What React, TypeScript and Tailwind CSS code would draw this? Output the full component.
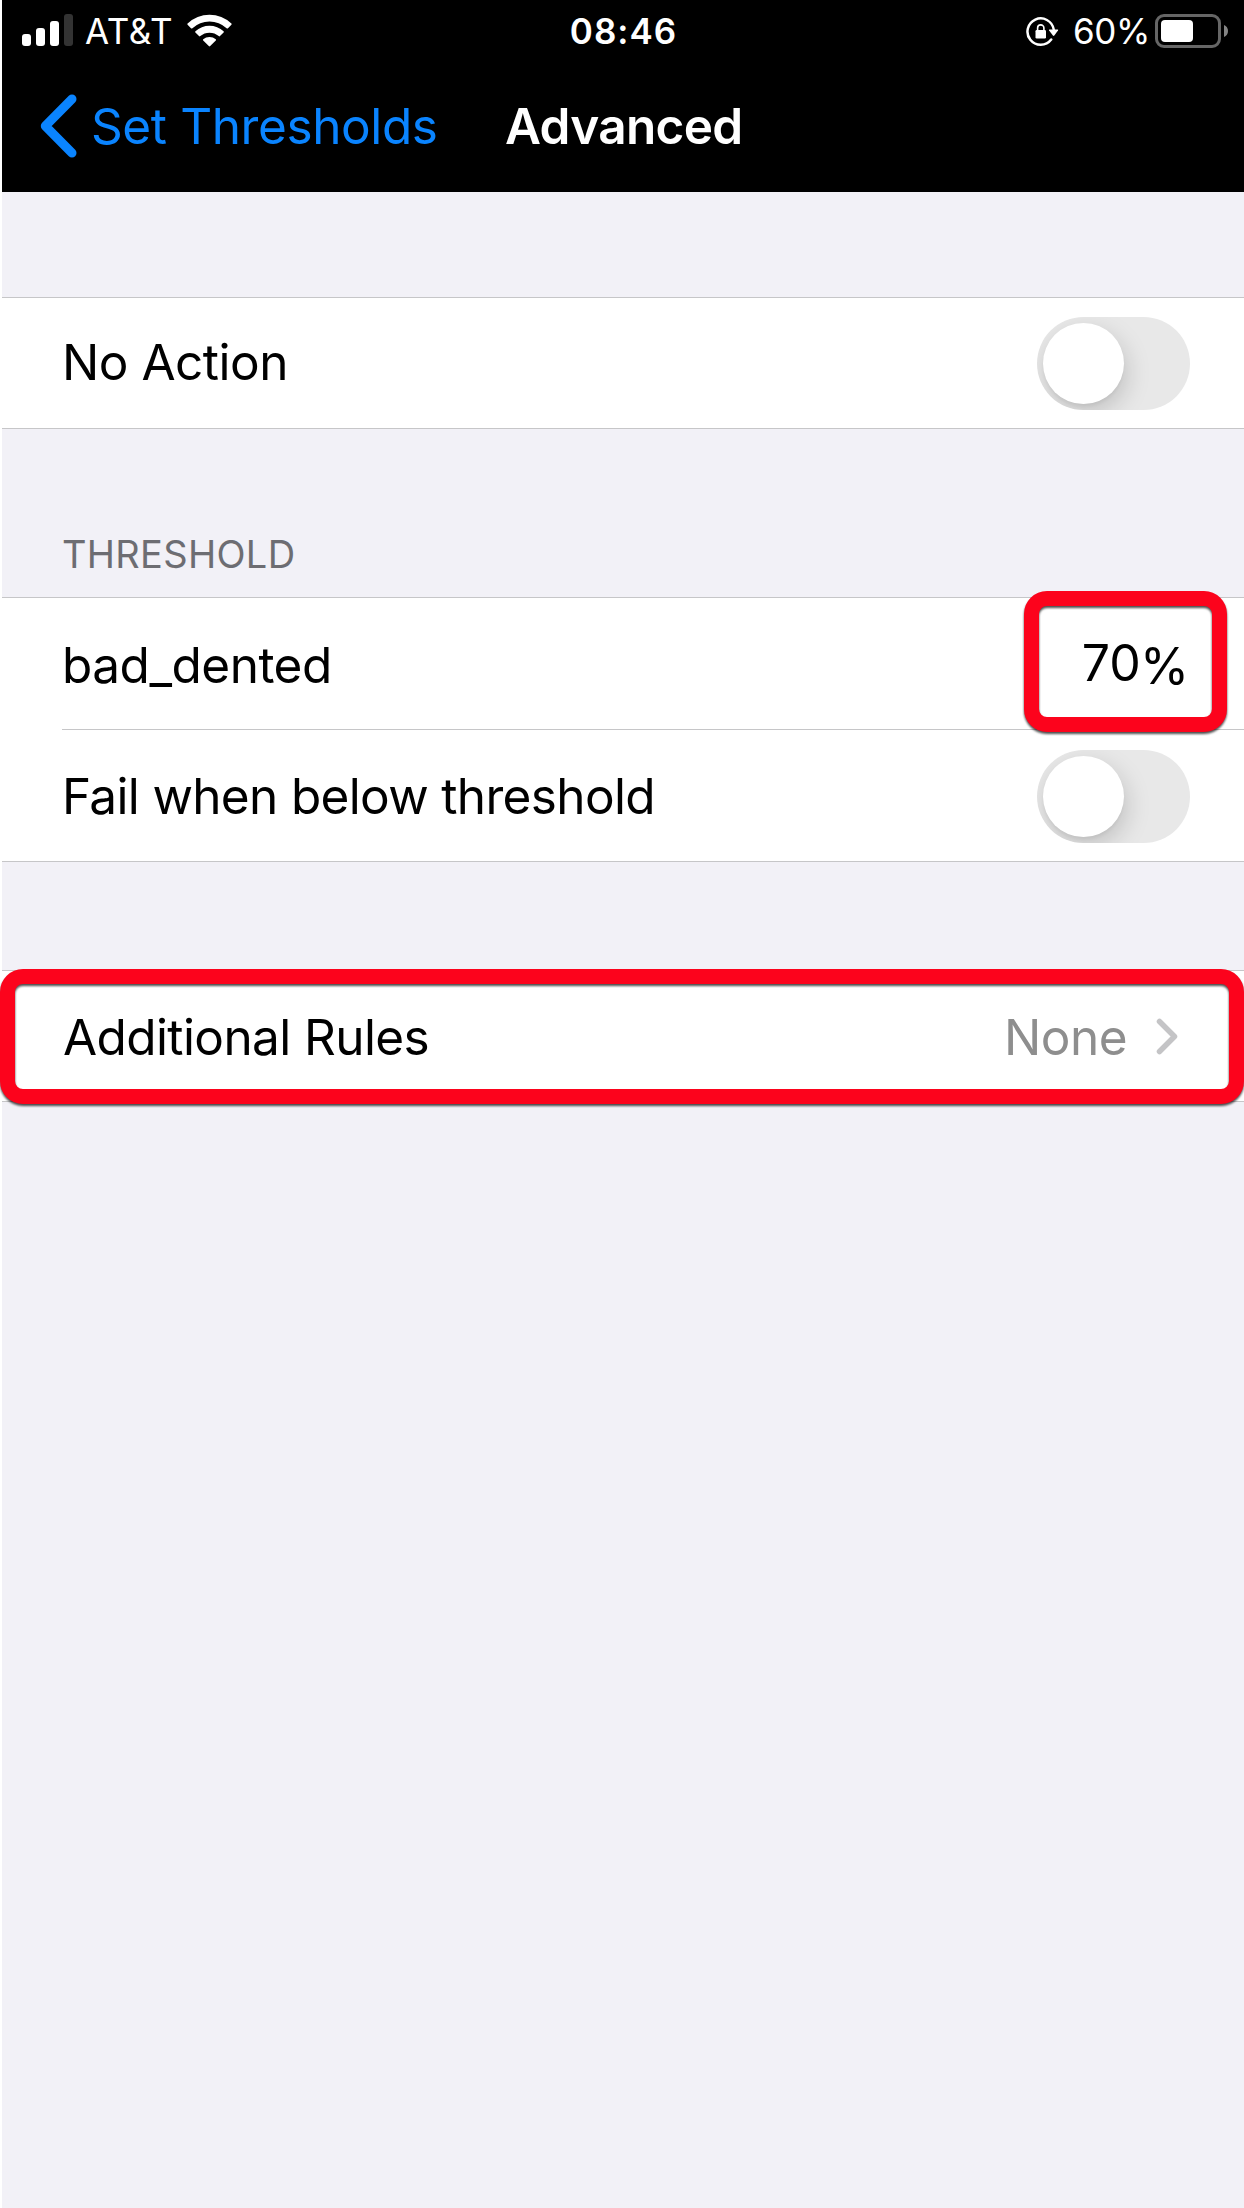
import React from "react";

function SignalBars() {
  return (
    <div className="ml-[20px] flex h-[32px] items-end gap-[5px]">
      <div className="h-[12px] w-[9px] rounded-[3px] bg-white" />
      <div className="h-[18px] w-[9px] rounded-[3px] bg-white" />
      <div className="h-[25px] w-[9px] rounded-[3px] bg-white" />
      <div className="h-[32px] w-[9px] rounded-[3px] bg-[#333333]" />
    </div>
  );
}

function WifiIcon() {
  return (
    <svg className="ml-[14px] h-[33px] w-[45px]" viewBox="0 0 45 33" fill="white">
      <path d="M0.6 9.4Q0 10 0.6 10.7L4 14.2Q4.7 14.8 5.4 14.2A25 25 0 0 1 39.6 14.2Q40.3 14.8 41 14.2L44.4 10.7Q45 10 44.4 9.4A31.8 31.8 0 0 0 0.6 9.4Z" />
      <path d="M8.4 17.3Q7.8 18 8.4 18.6L12 22.1Q12.6 22.7 13.3 22.1A14 14 0 0 1 31.7 22.1Q32.4 22.7 33 22.1L36.6 18.6Q37.2 18 36.6 17.3A20.6 20.6 0 0 0 8.4 17.3Z" />
      <path d="M16.2 25.3Q15.6 26 16.2 26.6L21.8 32.1Q22.5 32.8 23.2 32.1L28.8 26.6Q29.4 26 28.8 25.3A9.4 9.4 0 0 0 16.2 25.3Z" />
    </svg>
  );
}

function RotationLockIcon() {
  return (
    <svg className="mt-px h-[30px] w-[33px]" viewBox="0 0 33 30" fill="none">
      <path d="M25.2 22.6A13.2 13.2 0 1 1 27.7 12.4" stroke="white" strokeWidth="2.5" strokeLinecap="round" />
      <path d="M23.6 12.5H31.6Q32.6 12.7 32 13.6L28.3 18.6Q27.6 19.3 26.9 18.6L23.1 13.6Q22.6 12.7 23.6 12.5Z" fill="white" />
      <rect x="9.5" y="13" width="10.5" height="8.4" rx="1.2" fill="white" />
      <path d="M11.6 13.5V11a3.15 3.15 0 0 1 6.3 0V13.5" stroke="white" strokeWidth="1.6" />
    </svg>
  );
}

function BatteryIcon() {
  return (
    <div className="flex items-center">
      <div className="h-[34px] w-[66px] rounded-[9px] border-[3px] border-[#666666] p-[3px]">
        <div className="h-[22px] w-[32px] rounded-[4px] bg-white" />
      </div>
      <svg className="ml-[3px] h-[12px] w-[4px]" viewBox="0 0 4 12">
        <path d="M0 0C2.5 1 4 3.300 4 6S2.500 11 0 12Z" fill="#858585" />
      </svg>
    </div>
  );
}

function Toggle() {
  return (
    <div className="mr-[54px] h-[93px] w-[153px] overflow-hidden rounded-full bg-[#e8e8e8] p-[6px]">
      <div className="h-[81px] w-[81px] rounded-full bg-white shadow-[3px_9px_24px_rgba(0,0,0,0.17),0_3px_3px_rgba(0,0,0,0.04)]" />
    </div>
  );
}

export default function App() {
  return (
    <div className="h-[2208px] w-[1244px] border-l-2 border-white bg-[#f2f1f7] font-[Inter,sans-serif] text-[49.5px] text-black">
      <header className="h-[192px] bg-black text-white">
        <div className="grid h-[62px] grid-cols-[1fr_auto_1fr] text-[35px] leading-[62px]">
          <div className="flex h-[60px] items-center">
            <SignalBars />
            <span className="ml-[12px] pt-px tracking-[0.6px]">AT&amp;T</span>
            <WifiIcon />
          </div>
          <span className="pl-px font-semibold tracking-[1px]">08:46</span>
          <div className="flex h-[62px] items-center justify-end pr-[16px]">
            <RotationLockIcon />
            <span className="ml-[14px] mr-[5px] tracking-[-0.4px]">60%</span>
            <BatteryIcon />
          </div>
        </div>
        <nav className="flex h-[128px] items-center">
          <svg className="ml-[38px] h-[64px] w-[38px]" viewBox="0 0 38 64" fill="none">
            <path d="M32 5L5.300 32L32 59" stroke="#0a84ff" strokeWidth="9" strokeLinecap="round" strokeLinejoin="round" />
          </svg>
          <span className="ml-[13px] w-[414px] whitespace-nowrap tracking-[-0.4px] text-[#0a84ff]">Set Thresholds</span>
          <h1 className="font-semibold tracking-[-0.68px]">Advanced</h1>
        </nav>
      </header>

      <main>
        <section className="mt-[105px] flex h-[132px] items-center justify-between border-y border-[#c6c6c8] bg-white">
          <span className="pb-[2px] pl-[60px] tracking-[-0.5px]">No Action</span>
          <Toggle />
        </section>

        <h2 className="flex h-[168px] items-end pb-[19px] pl-[60px] text-[38px] leading-[48px] tracking-[0.3px] text-[#6d6d72]">THRESHOLD</h2>

        <section className="border-y border-[#c6c6c8] bg-white">
          <div className="relative flex h-[131px] items-center justify-between">
            <span className="pl-[60px] pt-[3px] tracking-[-0.5px]">bad_dented</span>
            <div className="mr-[55px] flex text-[50px]">
              <span>70</span>
              <span className="-ml-px mt-[3px] -mb-[3px]">%</span>
            </div>
            <div className="absolute right-[17px] top-[-7px] h-[141px] w-[203px] rounded-[23px] border-[15px] border-[#fc031c] drop-shadow-[0_2px_1px_rgba(0,0,0,0.7)]" />
          </div>
          <div className="ml-[60px] h-px bg-[#c6c6c8]" />
          <div className="flex h-[131px] items-center justify-between pt-px">
            <span className="pl-[60px] tracking-[-0.66px]">Fail when below threshold</span>
            <Toggle />
          </div>
        </section>

        <section className="relative mt-[108px] flex h-[132px] items-center justify-between border-y border-[#c6c6c8] bg-white">
          <span className="pl-[61px] pt-[2px] tracking-[-0.6px]">Additional Rules</span>
          <div className="flex items-center pr-[66px]">
            <span className="pt-[2px] tracking-[-0.5px] text-[#8e8e8e]">None</span>
            <svg className="ml-[29px] h-[37px] w-[22px]" viewBox="0 0 22 37" fill="none">
              <path d="M3.500 3.500L18.500 18.500L3.500 33.500" stroke="#c4c4c6" strokeWidth="5.500" strokeLinecap="round" strokeLinejoin="round" />
            </svg>
          </div>
          <div className="absolute -left-[2px] -top-[2px] h-[135px] w-[1244px] rounded-[23px] border-[15px] border-[#fc031c] drop-shadow-[0_2px_1px_rgba(0,0,0,0.7)]" />
        </section>
      </main>
    </div>
  );
}
